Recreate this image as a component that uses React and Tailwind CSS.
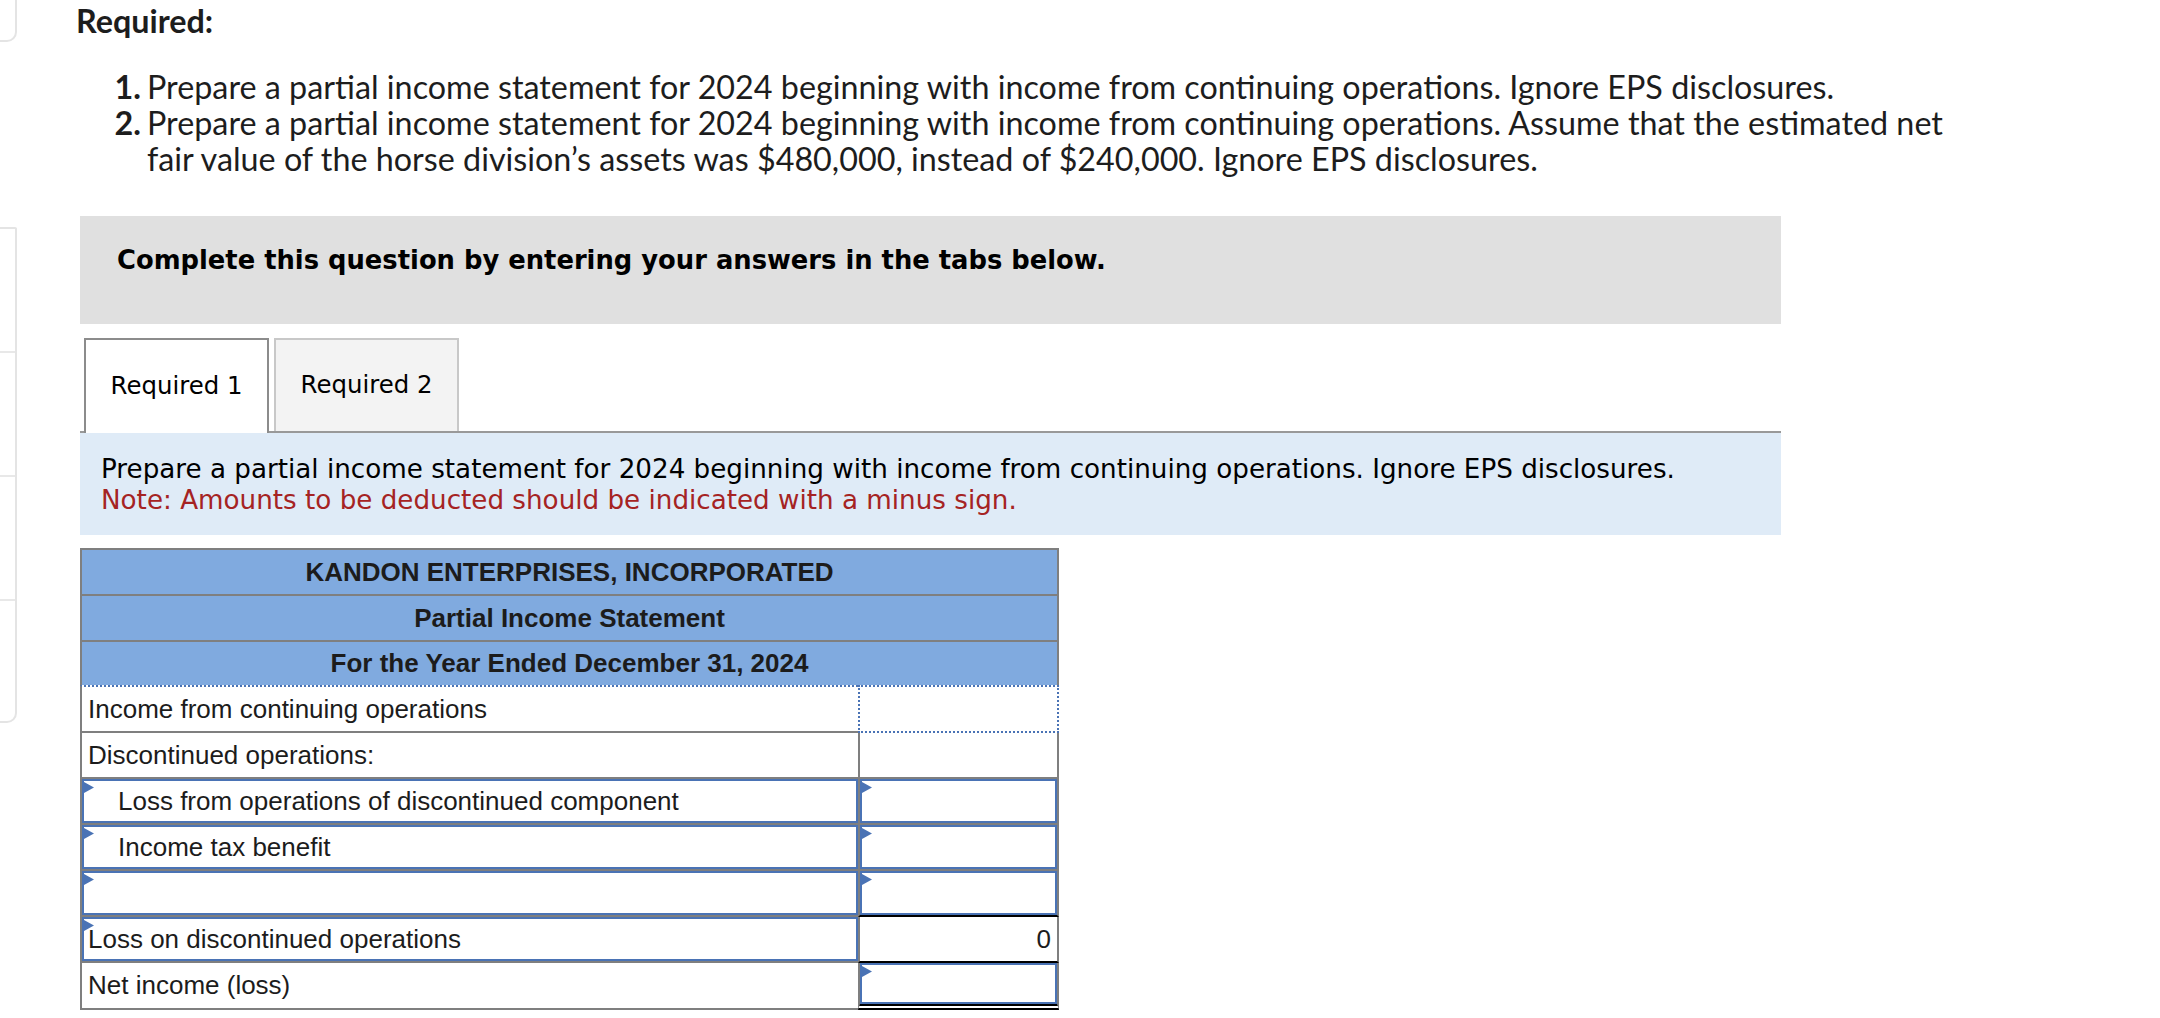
import React from "react";

const proxima = { fontFamily: "Lato, 'Open Sans', sans-serif" };
const verdana = { fontFamily: "'DejaVu Sans', Verdana, sans-serif" };

function Flag() {
  return (
    <svg
      className="absolute left-0 top-[1px]"
      width="10"
      height="11"
      viewBox="0 0 10 11"
    >
      <path d="M0 0L10 5.5L0 11Z" fill="#4a73b5" />
    </svg>
  );
}

function InputBox({ children, className = "" }) {
  return (
    <div
      className={
        "relative h-full w-full flex items-center border-2 border-[#4a73b5] " +
        className
      }
    >
      <Flag />
      {children}
    </div>
  );
}

function Sidebar() {
  return (
    <div className="w-[17px] shrink-0 flex flex-col">
      <div className="h-[42px] border-r-2 border-b-2 border-[#e4e4e4] rounded-br-[10px]" />
      <div className="mt-[185px] h-[496px] border-r-2 border-b-2 border-t-2 border-[#e4e4e4] rounded-br-[10px] rounded-tr-[2px] flex flex-col">
        <div className="h-[124px] border-b-2 border-[#e8e8e8]" />
        <div className="h-[124px] border-b-2 border-[#e8e8e8]" />
        <div className="h-[124px] border-b-2 border-[#e8e8e8]" />
        <div className="flex-1" />
      </div>
    </div>
  );
}

function Statement() {
  return (
    <div
      className="w-[979px] text-[26px] text-[#1c1c1c]"
      style={{ fontFamily: "'Liberation Sans', Arial, sans-serif" }}
    >
      {/* heading rows */}
      <div className="border-2 border-b-0 border-[#7f7f7f] bg-[#80aadf] font-bold">
        <div className="h-[46px] flex items-center justify-center border-b-2 border-[#7f7f7f]">
          KANDON ENTERPRISES, INCORPORATED
        </div>
        <div className="h-[46px] flex items-center justify-center border-b-2 border-[#7f7f7f]">
          Partial Income Statement
        </div>
        <div className="h-[43px] flex items-center justify-center">
          For the Year Ended December 31, 2024
        </div>
      </div>

      {/* income from continuing operations */}
      <div className="flex h-[48px]">
        <div className="w-[778px] flex items-center pl-[6px] border-l-2 border-t-2 border-b-2 border-l-[#7f7f7f] border-b-[#7f7f7f] border-t-[#4a73b5] border-dotted [border-left-style:solid] [border-bottom-style:solid]">
          Income from continuing operations
        </div>
        <div className="w-[201px] border-2 border-dotted border-[#4a73b5]" />
      </div>

      {/* discontinued operations */}
      <div className="flex h-[46px]">
        <div className="w-[778px] flex items-center pl-[6px] border-l-2 border-b-2 border-[#7f7f7f]">
          Discontinued operations:
        </div>
        <div className="w-[201px] border-l-2 border-r-2 border-b-2 border-[#7f7f7f]" />
      </div>

      {/* input rows */}
      {["Loss from operations of discontinued component", "Income tax benefit", ""].map(
        (label, i) => (
          <div key={i} className="flex h-[46px]">
            <div className="w-[778px] border-l-2 border-b-2 border-[#7f7f7f]">
              <InputBox className="pl-[34px]">{label}</InputBox>
            </div>
            <div
              className={
                i === 2
                  ? "w-[201px] border-l-2 border-r-2 border-[#7f7f7f] border-b-2 border-b-black"
                  : "w-[201px] border-l-2 border-r-2 border-b-2 border-[#7f7f7f]"
              }
            >
              <InputBox />
            </div>
          </div>
        )
      )}

      {/* loss on discontinued operations */}
      <div className="flex h-[46px]">
        <div className="w-[778px] border-l-2 border-b-2 border-[#7f7f7f]">
          <InputBox className="pl-[4px]">Loss on discontinued operations</InputBox>
        </div>
        <div className="w-[201px] flex items-center justify-end pr-[6px] border-l-2 border-r-2 border-[#7f7f7f] border-b-2 border-b-black">
          0
        </div>
      </div>

      {/* net income */}
      <div className="flex h-[47px]">
        <div className="w-[778px] flex items-center pl-[6px] border-l-2 border-b-2 border-[#7f7f7f]">
          Net income (loss)
        </div>
        <div className="w-[201px] border-l-2 border-r-2 border-[#7f7f7f] border-b-[6px] border-double border-b-black [border-left-style:solid] [border-right-style:solid]">
          <InputBox />
        </div>
      </div>
    </div>
  );
}

export default function App() {
  return (
    <div className="min-h-screen bg-white flex">
      <Sidebar />
      <div className="ml-[63px] w-[1701px] pb-10">
        <div
          className="-ml-[4px] pt-[3px] text-[32.3px] leading-[36px] font-bold text-[#1d1d1d]"
          style={proxima}
        >
          Required:
        </div>

        <ol
          className="mt-[30px] text-[32.3px] leading-[36px] text-[#1d1d1d]"
          style={proxima}
        >
          <li className="flex">
            <span className="w-[64px] shrink-0 text-right pr-[3px] font-bold">1.</span>
            <span className="w-[1800px] shrink-0 pl-[3px]">
              Prepare a partial income statement for 2024 beginning with income
              from continuing operations. Ignore EPS disclosures.
            </span>
          </li>
          <li className="flex">
            <span className="w-[64px] shrink-0 text-right pr-[3px] font-bold">2.</span>
            <span className="w-[1800px] shrink-0 pl-[3px]">
              Prepare a partial income statement for 2024 beginning with income
              from continuing operations. Assume that the estimated net fair
              value of the horse division’s assets was $480,000, instead of
              $240,000. Ignore EPS disclosures.
            </span>
          </li>
        </ol>

        <div
          className="mt-[39px] h-[108px] bg-[#e0e0e0] pt-[28px] pl-[37px] text-[25.8px] leading-[32px] font-bold text-black"
          style={verdana}
        >
          Complete this question by entering your answers in the tabs below.
        </div>

        <div style={verdana}>
          <div className="mt-[14px] flex items-end gap-[5px] pl-[4px] border-b-2 border-[#999999]">
            <div className="relative -mb-[2px] h-[95px] w-[185px] bg-white border-2 border-b-0 border-[#8c8c8c] flex items-center justify-center text-[24.4px] text-black">
              Required 1
            </div>
            <div className="h-[93px] w-[185px] bg-[#f3f3f3] border-2 border-b-0 border-[#c8c8c8] flex items-center justify-center text-[24.4px] text-black">
              Required 2
            </div>
          </div>

          <div className="bg-[#dfebf7] pt-[21px] pb-[19px] pl-[21px] text-[26.2px] leading-[31px]">
            <div className="text-black">
              Prepare a partial income statement for 2024 beginning with income
              from continuing operations. Ignore EPS disclosures.
            </div>
            <div className="text-[#a52323]">
              Note: Amounts to be deducted should be indicated with a minus sign.
            </div>
          </div>
        </div>

        <div className="mt-[13px]">
          <Statement />
        </div>
      </div>
    </div>
  );
}
